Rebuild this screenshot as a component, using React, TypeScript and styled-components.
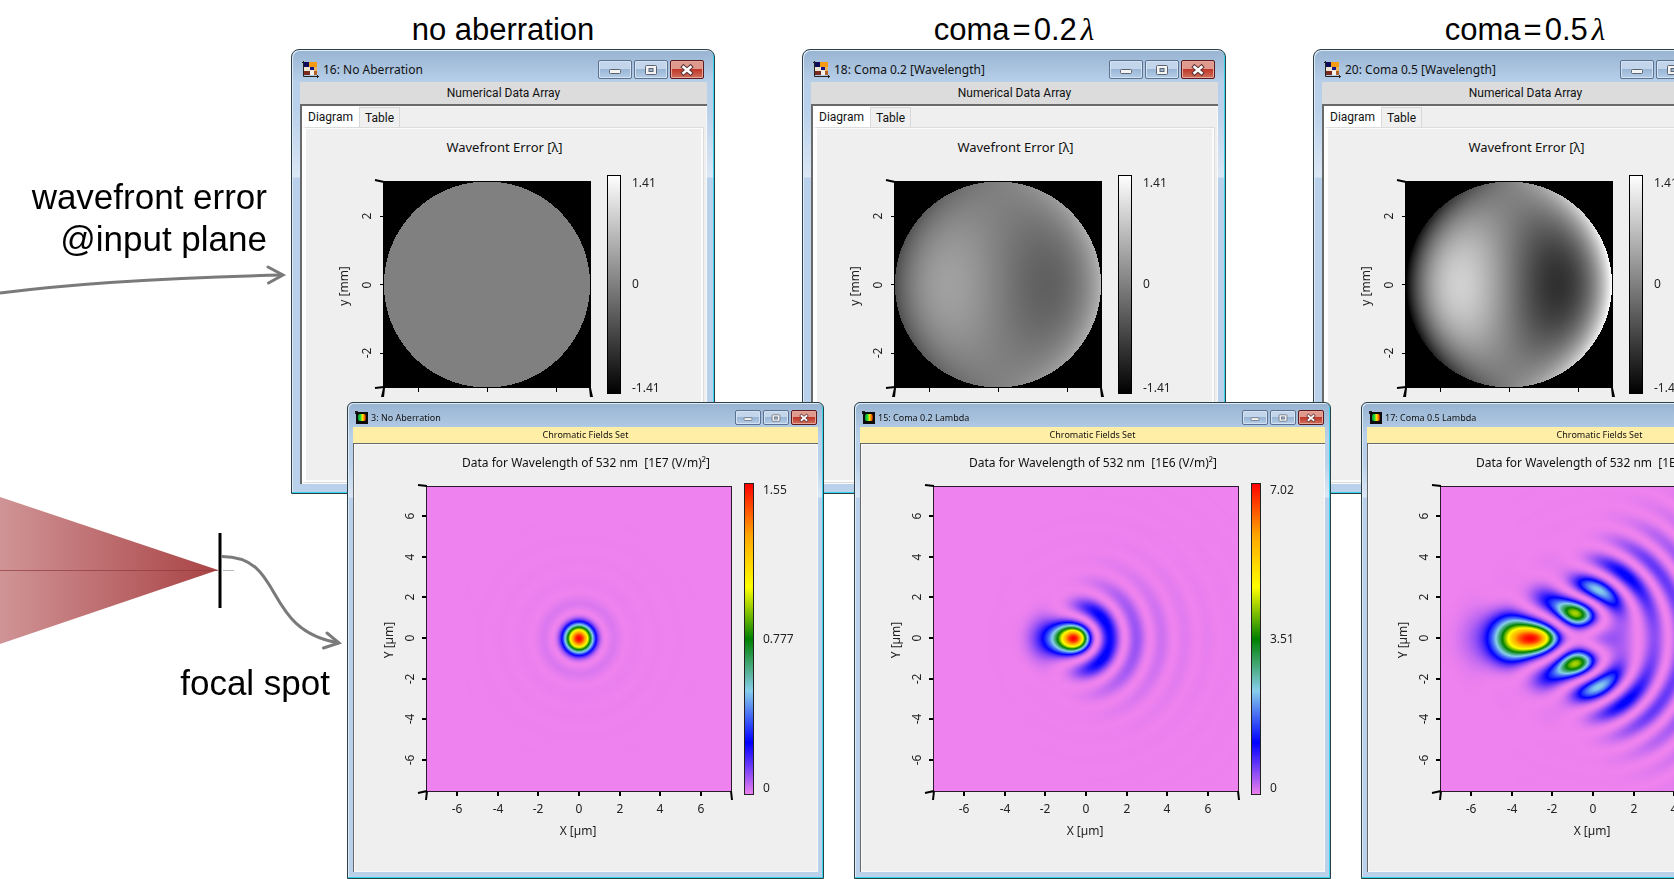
import React, { useEffect, useRef } from "react";
import styled, { createGlobalStyle, css } from "styled-components";

const Global = createGlobalStyle`
  *, *::before, *::after { box-sizing: border-box; }
  body { margin: 0; background: #fff; }
`;

const uiFont = '"Noto Sans", "Open Sans", sans-serif';
const dialogFont = 'Roboto, "Noto Sans", sans-serif';
const noteFont = '"Liberation Sans", Arial, sans-serif';

/* ---------- optics ---------- */

type Rgb = [number, number, number];

const RAINBOW: Rgb[] = [
  [238, 130, 238],
  [0, 0, 255],
  [135, 206, 235],
  [0, 128, 0],
  [255, 255, 0],
  [255, 165, 0],
  [255, 0, 0],
];

const WAVEFRONT_LIMIT = 0.5 * Math.sqrt(8);
const FILL_RATIO = 0.865;
const APODIZATION = 0.3;
const LAMBDA_OVER_NA = 2.08;
const PX_PER_MICRON = 20.28;

const rainbow = (t: number): Rgb => {
  const s = Math.min(Math.max(t, 0), 1) * (RAINBOW.length - 1);
  const i = Math.min(Math.floor(s), RAINBOW.length - 2);
  const f = s - i;
  return [0, 1, 2].map((k) => RAINBOW[i][k] * (1 - f) + RAINBOW[i + 1][k] * f) as Rgb;
};

const comaAt = (coma: number, x: number, y: number) =>
  coma * Math.sqrt(8) * (3 * (x * x + y * y) - 2) * x;

function paint(canvas: HTMLCanvasElement, color: (i: number, j: number) => Rgb) {
  const ctx = canvas.getContext("2d");
  if (!ctx) return;
  const { width, height } = canvas;
  const image = ctx.createImageData(width, height);
  for (let j = 0; j < height; j++) {
    for (let i = 0; i < width; i++) {
      const [r, g, b] = color(i, j);
      const k = 4 * (j * width + i);
      image.data[k] = r;
      image.data[k + 1] = g;
      image.data[k + 2] = b;
      image.data[k + 3] = 255;
    }
  }
  ctx.putImageData(image, 0, 0);
}

function paintWavefront(canvas: HTMLCanvasElement, coma: number) {
  const c = canvas.width / 2;
  paint(canvas, (i, j) => {
    const x = (i + 0.5 - c) / (c - 1);
    const y = (j + 0.5 - canvas.height / 2) / (c - 1);
    if (x * x + y * y > 1) return [0, 0, 0];
    const v = 128 + (127 * comaAt(coma, x, y)) / WAVEFRONT_LIMIT;
    return [v, v, v];
  });
}

/* Far field of the pupil by a separable Fourier sum: first over x, then over y. */
function paintFocus(canvas: HTMLCanvasElement, coma: number) {
  const { width: w, height: h } = canvas;
  const n = 72;
  const at = (i: number) => -1 + (2 * i + 1) / n;
  const re = new Float64Array(n * w);
  const im = new Float64Array(n * w);
  for (let j = 0; j < n; j++) {
    for (let i = 0; i < n; i++) {
      const x = at(i);
      const y = at(j);
      const r2 = x * x + y * y;
      if (r2 > 1) continue;
      const amp = Math.exp(-APODIZATION * r2);
      const phase = 2 * Math.PI * comaAt(coma, x * FILL_RATIO, y * FILL_RATIO);
      for (let p = 0; p < w; p++) {
        const u = (p + 0.5 - w / 2) / PX_PER_MICRON / LAMBDA_OVER_NA;
        const a = phase - 2 * Math.PI * u * x;
        re[j * w + p] += amp * Math.cos(a);
        im[j * w + p] += amp * Math.sin(a);
      }
    }
  }
  const power = new Float64Array(w * h);
  let peak = 0;
  for (let q = 0; q < h; q++) {
    const v = (q + 0.5 - h / 2) / PX_PER_MICRON / LAMBDA_OVER_NA;
    const cos = Array.from({ length: n }, (_, j) => Math.cos(2 * Math.PI * v * at(j)));
    for (let p = 0; p < w; p++) {
      let r = 0;
      let m = 0;
      for (let j = 0; j < n; j++) {
        r += re[j * w + p] * cos[j];
        m += im[j * w + p] * cos[j];
      }
      const s = r * r + m * m;
      power[q * w + p] = s;
      if (s > peak) peak = s;
    }
  }
  paint(canvas, (i, j) => rainbow(power[j * w + i] / peak));
}

/* ---------- page ---------- */

const Page = styled.main`
  position: relative;
  overflow: hidden;
  min-height: 100vh;
  background: #fff;
`;

const Beam = styled.svg`
  position: absolute;
  left: 0;
  top: 0;
`;

const Note = styled.p<{ $right: number; $top: number }>`
  position: absolute;
  left: 0;
  top: ${(p) => p.$top}px;
  width: ${(p) => p.$right}px;
  margin: 0;
  font: 35px/42px ${noteFont};
  color: #000;
  text-align: right;
  white-space: pre-line;
`;

const WavefrontRow = styled.div`
  display: flex;
  gap: 87px;
  padding-left: 291px;
`;

const FocusRow = styled.div`
  position: relative;
  display: flex;
  gap: 30px;
  margin-top: -92px;
  padding-left: 347px;
`;

const Case = styled.section`
  flex: none;
  width: 424px;
`;

const CaseTitle = styled.h2`
  margin: 0;
  height: 49px;
  padding-top: 10px;
  font: 31px/40px ${noteFont};
  text-align: center;
  color: #000;
`;

const Equals = styled.span`
  margin: 0 3px;
`;

const Lambda = styled.i`
  padding-left: 4px;
  font-family: "Liberation Serif", serif;
`;

/* ---------- windows ---------- */

const Frame = styled.article<{ $small?: boolean }>`
  flex: none;
  width: ${(p) => (p.$small ? 477 : 424)}px;
  padding: ${(p) => (p.$small ? "0 5px 6px 5px" : "0 7px 9px 8px")};
  border: 1px solid #2c4048;
  border-radius: ${(p) => (p.$small ? "6px 6px 0 0" : "8px 8px 0 0")};
  background: linear-gradient(#98b4d2, #b7cfe9 32px, #b9d1ea 60px, #dbe7f5 ${(p) => (p.$small ? 94 : 127)}px, #b9d1ea ${(p) => (p.$small ? 95 : 128)}px);
  box-shadow: inset -1px -1px 0 #35d6ea, inset 1px 1px 0 #dfeaf6;
  font-family: ${uiFont};
  color: #111;
`;

const TitleBar = styled.header<{ $small?: boolean }>`
  display: flex;
  align-items: center;
  gap: ${(p) => (p.$small ? 3 : 4)}px;
  height: ${(p) => (p.$small ? 24 : 32)}px;
  padding: ${(p) => (p.$small ? "5px 1px 0 2px" : "7px 3px 0 2px")};
`;

const WindowTitle = styled.h3<{ $small?: boolean }>`
  flex: 1;
  margin: 0;
  font-size: ${(p) => (p.$small ? 9 : 12)}px;
  line-height: 16px;
  font-weight: 400;
  white-space: nowrap;
`;

const Controls = styled.div`
  display: flex;
  gap: 2px;
`;

const ControlButton = styled.button<{ $small?: boolean; $close?: boolean }>`
  display: grid;
  place-items: center;
  width: ${(p) => (p.$small ? 26 : 34)}px;
  height: ${(p) => (p.$small ? 15 : 19)}px;
  padding: 0;
  border: 1px solid #5d7290;
  border-radius: 2px;
  background: linear-gradient(#c3d5ea 0 45%, #9ab6d5 50%, #b4cde8);
  box-shadow: inset 0 0 0 1px #d4e3f2;
  ${(p) =>
    p.$close &&
    css`
      border-color: #5c1a1c;
      background: linear-gradient(#df9a8d 0 45%, #c0382a 50%, #d0705c);
      box-shadow: inset 0 0 0 1px #e5a79c;
    `}
`;

const Caption = styled.div<{ $small?: boolean }>`
  height: ${(p) => (p.$small ? 16 : 22)}px;
  background: ${(p) => (p.$small ? "#ffeea5" : "#dcdcdc")};
  font: ${(p) => (p.$small ? `9px/16px ${uiFont}` : `12px/22px ${dialogFont}`)};
  text-align: center;
`;

const Client = styled.div<{ $small?: boolean }>`
  display: flex;
  flex-direction: column;
  height: ${(p) => (p.$small ? 429 : 380)}px;
  border: solid #696969;
  border-width: ${(p) => (p.$small ? "1px 0 0 1px" : "2px 0 0 2px")};
  background: #efefef;
  box-shadow: inset 0 0 0 1px #f8f8f8;
`;

const TabList = styled.div`
  display: flex;
  align-items: flex-end;
  height: 21px;
`;

const Tab = styled.button<{ $active?: boolean }>`
  height: ${(p) => (p.$active ? 21 : 20)}px;
  width: ${(p) => (p.$active ? 57 : 41)}px;
  padding: 0;
  border: ${(p) => (p.$active ? "0" : "1px solid #d9d9d9")};
  border-bottom: 0;
  background: ${(p) => (p.$active ? "#fff" : "#f0f0f0")};
  font: 12px/18px ${dialogFont};
  color: #111;
`;

const TabPanel = styled.div`
  flex: 1;
  margin: 0 3px 1px 0;
  border: 1px solid #dcdcdc;
  border-left: 4px solid #fff;
  box-shadow: inset -2px -2px 0 #fbfbfb, inset 0 1px 0 #fbfbfb;
`;

const PlotTitle = styled.h4<{ $small?: boolean }>`
  margin: ${(p) => (p.$small ? "9px 0 0" : "9px 0 8px")};
  font-size: ${(p) => (p.$small ? 12 : 13)}px;
  line-height: ${(p) => (p.$small ? 19 : 20)}px;
  font-weight: 400;
  text-align: center;
  white-space: pre;
`;

const Plot = styled.figure`
  display: grid;
  margin: 0;

  > * {
    grid-area: 1 / 1;
  }

  text {
    font: 12px ${uiFont};
    fill: #222;
  }
`;

const WavefrontMap = styled.canvas`
  margin: 16px 0 0 77px;
`;

const FocusMap = styled.canvas`
  margin: 14px 0 0 72px;
`;

function Buttons({ small }: { small?: boolean }) {
  const size = small ? 10 : 14;
  return (
    <Controls>
      <ControlButton $small={small} aria-label="Minimize">
        <svg width={size} height={size} viewBox="0 0 14 14">
          <rect x="1.5" y="6.5" width="11" height="4" rx="1" fill="#f4f4f4" stroke="#5b6470" />
        </svg>
      </ControlButton>
      <ControlButton $small={small} aria-label="Maximize">
        <svg width={size} height={size} viewBox="0 0 14 14">
          <rect x="1.5" y="2.5" width="11" height="9" rx="1" fill="#f4f4f4" stroke="#5b6470" />
          <rect x="5" y="5.5" width="4" height="3" fill="#9db6d2" stroke="#5b6470" />
        </svg>
      </ControlButton>
      <ControlButton $small={small} $close aria-label="Close">
        <svg width={size} height={size} viewBox="0 0 14 14">
          <path d="M3.5 4l7 6M10.5 4l-7 6" stroke="#5a3436" strokeWidth="4.5" strokeLinecap="square" />
          <path d="M3.5 4l7 6M10.5 4l-7 6" stroke="#fff" strokeWidth="2.5" strokeLinecap="square" />
        </svg>
      </ControlButton>
    </Controls>
  );
}

function ArrayIcon() {
  return (
    <svg width="17" height="17" viewBox="0 0 17 17" aria-hidden="true">
      <rect x="2" y="1" width="5" height="5" fill="#0b0b58" />
      <rect x="7" y="1" width="8" height="5" fill="#f59a13" />
      <rect x="2" y="6" width="13" height="4" fill="#efe6d2" />
      <rect x="8" y="6" width="4" height="3" fill="#14148a" />
      <rect x="12" y="6" width="3" height="4" fill="#e9b45b" />
      <rect x="2" y="10" width="6" height="4" fill="#7b2b20" />
      <rect x="8" y="10" width="4" height="4" fill="#f4f0ea" />
      <rect x="12" y="10" width="3" height="4" fill="#b5622a" />
      <path d="M1.5 0v15.5H17M0 1.5h2M15.5 14v3" fill="none" stroke="#222" />
    </svg>
  );
}

function FieldIcon({ id }: { id: string }) {
  return (
    <svg width="13" height="13" viewBox="0 0 13 13" aria-hidden="true">
      <defs>
        <linearGradient id={id}>
          <stop offset="0" stopColor="#0a9a30" />
          <stop offset="0.3" stopColor="#18d840" />
          <stop offset="0.55" stopColor="#ffe600" />
          <stop offset="0.8" stopColor="#ff7a00" />
          <stop offset="1" stopColor="#8c1400" />
        </linearGradient>
      </defs>
      <rect x="1" y="1" width="12" height="12" fill="#0c0c0c" />
      <rect x="3" y="3" width="8" height="7" rx="2" fill={`url(#${id})`} />
      <path d="M0 0.5h3M0.5 0v3" stroke="#222" />
    </svg>
  );
}

type WavefrontProps = { title: string; coma: number };

function WavefrontWindow({ title, coma }: WavefrontProps) {
  const ref = useRef<HTMLCanvasElement>(null);
  useEffect(() => {
    if (ref.current) paintWavefront(ref.current, coma);
  }, [coma]);
  const id = `gray-${coma * 10}`;
  return (
    <Frame>
      <TitleBar>
        <ArrayIcon />
        <WindowTitle>{title}</WindowTitle>
        <Buttons />
      </TitleBar>
      <Caption>Numerical Data Array</Caption>
      <Client>
        <TabList role="tablist">
          <Tab $active role="tab" aria-selected="true">Diagram</Tab>
          <Tab role="tab" aria-selected="false">Table</Tab>
        </TabList>
        <TabPanel role="tabpanel">
          <PlotTitle>Wavefront Error [λ]</PlotTitle>
          <Plot>
            <WavefrontMap ref={ref} width={208} height={207} />
            <svg width="392" height="240">
              <defs>
                <linearGradient id={id} x1="0" y1="0" x2="0" y2="1">
                  <stop offset="0" stopColor="#fff" />
                  <stop offset="1" stopColor="#000" />
                </linearGradient>
              </defs>
              <path d="M77.5 16v207M77 222.5h208M74 51.5h4M74 119.5h4M74 188.5h4M112.5 222v5M181.5 222v5M250.5 222v5" stroke="#000" fill="none" />
              <path d="M69 15l9 2M69 223l9-1" stroke="#000" strokeWidth="2" />
              <path d="M77 223l-2 9h3l1-9zM283 223l1 9h3l-2-9z" />
              <rect x="301.5" y="10.5" width="13" height="218" fill={`url(#${id})`} stroke="#000" />
              <g textAnchor="middle">
                <text transform="translate(65 51) rotate(-90)">2</text>
                <text transform="translate(65 120) rotate(-90)">0</text>
                <text transform="translate(65 188) rotate(-90)">-2</text>
                <text transform="translate(42 121) rotate(-90)">y [mm]</text>
              </g>
              <text x="326" y="22">1.41</text>
              <text x="326" y="123">0</text>
              <text x="326" y="227">-1.41</text>
            </svg>
          </Plot>
        </TabPanel>
      </Client>
    </Frame>
  );
}

type FocusProps = { title: string; coma: number; exponent: number; top: string; middle: string };

const TICKS = [-6, -4, -2, 0, 2, 4, 6];

function FocusWindow({ title, coma, exponent, top, middle }: FocusProps) {
  const ref = useRef<HTMLCanvasElement>(null);
  useEffect(() => {
    if (ref.current) paintFocus(ref.current, coma);
  }, [coma]);
  const id = `rainbow-${coma * 10}`;
  const along = (center: number, t: number) => Math.round(center + t * PX_PER_MICRON);
  return (
    <Frame $small>
      <TitleBar $small>
        <FieldIcon id={`icon-${coma * 10}`} />
        <WindowTitle $small>{title}</WindowTitle>
        <Buttons small />
      </TitleBar>
      <Caption $small>Chromatic Fields Set</Caption>
      <Client $small>
        <PlotTitle $small>{`Data for Wavelength of 532 nm  [1E${exponent} (V/m)²]`}</PlotTitle>
        <Plot>
          <FocusMap ref={ref} width={306} height={305} />
          <svg width="460" height="390">
            <defs>
              <linearGradient id={id} x1="0" y1="0" x2="0" y2="1">
                {[...RAINBOW].reverse().map((c, i) => (
                  <stop key={i} offset={i / 6} stopColor={`rgb(${c.join(",")})`} />
                ))}
              </linearGradient>
            </defs>
            <rect x="72.5" y="14.5" width="305" height="305" fill="none" stroke="#2b1a2b" />
            <path d="M64 13l9 1M64 321l9-2M73 319l-1 9M377 319l1 9" stroke="#000" strokeWidth="2" />
            {TICKS.map((t) => (
              <React.Fragment key={t}>
                <path d={`M68 ${along(166, -t)}h4M${along(225, t)} 320v4`} stroke="#000" strokeWidth="2" />
                <text x={along(225, t)} y="341" textAnchor="middle">{t}</text>
                <text transform={`translate(60 ${along(166, -t)}) rotate(-90)`} textAnchor="middle">{t}</text>
              </React.Fragment>
            ))}
            <text x="224" y="363" textAnchor="middle">X [µm]</text>
            <text transform="translate(39 168) rotate(-90)" textAnchor="middle">Y [µm]</text>
            <rect x="390.5" y="11.5" width="9" height="311" fill={`url(#${id})`} stroke="#222" />
            <text x="409" y="22">{top}</text>
            <text x="409" y="171">{middle}</text>
            <text x="409" y="320">0</text>
          </svg>
        </Plot>
      </Client>
    </Frame>
  );
}

function BeamDrawing() {
  return (
    <Beam width="350" height="700" aria-hidden="true">
      <defs>
        <linearGradient id="beam">
          <stop offset="0" stopColor="#d09496" />
          <stop offset="1" stopColor="#a94345" />
        </linearGradient>
      </defs>
      <path d="M0 497L218 570 0 644z" fill="url(#beam)" />
      <path d="M0 570.5h218" stroke="#8e3a3e" strokeOpacity="0.7" />
      <path d="M223 570.5h11" stroke="#b8b8b8" />
      <path d="M220 533v75" stroke="#000" strokeWidth="3" />
      <g fill="none" stroke="#7a7a7a" strokeWidth="3">
        <path d="M0 293C70 284 150 278 283 275" />
        <path d="M268 267L283 275 268.5 283" strokeLinecap="round" />
        <path d="M222 556.5C286 556.5 261 630 339 643" />
        <path d="M327 633L339 643 323.5 648" strokeLinecap="round" />
      </g>
    </Beam>
  );
}

export default function App() {
  return (
    <>
      <Global />
      <Page>
        <BeamDrawing />
        <Note $right={267} $top={176}>{"wavefront error\n@input plane"}</Note>
        <Note $right={330} $top={662}>focal spot</Note>
        <WavefrontRow>
          <Case>
            <CaseTitle>no aberration</CaseTitle>
            <WavefrontWindow title="16: No Aberration" coma={0} />
          </Case>
          <Case>
            <CaseTitle>coma<Equals>=</Equals>0.2<Lambda>λ</Lambda></CaseTitle>
            <WavefrontWindow title="18: Coma 0.2 [Wavelength]" coma={0.2} />
          </Case>
          <Case>
            <CaseTitle>coma<Equals>=</Equals>0.5<Lambda>λ</Lambda></CaseTitle>
            <WavefrontWindow title="20: Coma 0.5 [Wavelength]" coma={0.5} />
          </Case>
        </WavefrontRow>
        <FocusRow>
          <FocusWindow title="3: No Aberration" coma={0} exponent={7} top="1.55" middle="0.777" />
          <FocusWindow title="15: Coma 0.2 Lambda" coma={0.2} exponent={6} top="7.02" middle="3.51" />
          <FocusWindow title="17: Coma 0.5 Lambda" coma={0.5} exponent={6} top="2.01" middle="1" />
        </FocusRow>
      </Page>
    </>
  );
}
